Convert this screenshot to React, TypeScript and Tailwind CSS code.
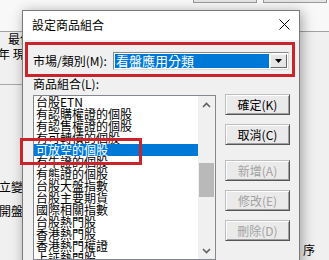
import React from "react";

const items = [
  "台股ETN",
  "有認購權證的個股",
  "有認售權證的個股",
  "有可轉債的個股",
  "可放空的個股",
  "有牛證的個股",
  "有熊證的個股",
  "台股大盤指數",
  "台股主要期貨",
  "國際相關指數",
  "台股熱門股",
  "香港熱門股",
  "香港熱門權證",
  "上証熱門股",
];

function Btn({ label, disabled }: { label: string; disabled?: boolean }) {
  return (
    <div
      className={`h-[21px] w-[65px] flex items-center justify-center text-[12px] leading-[12px] bg-[#eaeaea] border border-[#bdbdbd] border-b-[#555555] border-r-[#555555] shadow-[inset_1px_1px_0_#ffffff,inset_-1px_-1px_0_#a0a0a0] ${
        disabled ? "text-[#a3a3a3]" : "text-black"
      }`}
    >
      {label}
    </div>
  );
}

function Chevron({ up }: { up?: boolean }) {
  return (
    <svg width="9" height="6" viewBox="0 0 9 6">
      <path
        d={up ? "M1 5 L4.5 1.5 L8 5" : "M1 1 L4.5 4.5 L8 1"}
        fill="none"
        stroke="#606060"
        strokeWidth="1.6"
      />
    </svg>
  );
}

export default function App() {
  return (
    <div className="relative w-[329px] h-[260px] overflow-hidden bg-[#f0f0f0] font-['Noto_Sans_CJK_TC',sans-serif] text-black">
      {/* background application */}
      <div className="flex flex-col h-full">
        <div className="h-[32px] shrink-0 bg-[#f8f8f8] border-b border-[#a0a0a0] flex justify-end gap-[6px] pr-[2px]">
          <div className="w-[64px] h-[3px] border-x border-b border-[#9a9a9a] bg-[#e4e4e4]" />
          <div className="w-[64px] h-[3px] border-x border-b border-[#9a9a9a] bg-[#e4e4e4]" />
        </div>
        <div className="flex-1 flex justify-between">
          <div className="w-[22px] flex flex-col text-[12px] leading-[12px] whitespace-nowrap">
            <div className="pl-[8px] mt-[1px]">最佳</div>
            <div className="-ml-[2px] mt-[3px]">年 現</div>
            <div className="mt-[24px] border-b border-[#a8a8a8]" />
            <div className="-ml-[1px] mt-[96px]">立變化</div>
            <div className="-ml-[1px] mt-[12px]">開盤價</div>
          </div>
          <div className="w-[29px] flex flex-col justify-end pb-[4px] pl-[3px] text-[12px] leading-[12px]">
            序
          </div>
        </div>
      </div>

      {/* dialog */}
      <div className="absolute left-[22px] top-[10px] w-[278px] h-[262px] border border-[#7a7a7a] bg-[#f0f0f0] shadow-[2px_2px_12px_rgba(0,0,0,0.35)] flex flex-col">
        <div className="h-[29px] shrink-0 bg-white flex items-center justify-between pl-[9px] pr-[9px]">
          <span className="text-[12px] leading-[12px] -mt-[2px]">設定商品組合</span>
          <svg width="11" height="11" viewBox="0 0 11 11" className="-mt-[2px]">
            <path d="M0.5 0.5 L10.5 10.5 M10.5 0.5 L0.5 10.5" stroke="#000" strokeWidth="1" />
          </svg>
        </div>
        <div className="flex-1 flex flex-col pl-[2px] pr-[4px] pt-[2px]">
          {/* market/category row (highlighted) */}
          <div className="h-[35px] border-[3px] border-[#c9242b] flex items-center pl-[5px] pr-[3px] pt-[2px]">
            <span className="w-[80px] text-[12px] leading-[12px] whitespace-nowrap">市場/類別(M):</span>
            <div className="w-[176px] h-[18px] border border-[#8a8a8a] border-b-[#dcdcdc] border-r-[#dcdcdc] bg-white flex p-[1px]">
              <div className="flex-1 bg-[#0078d7] text-white text-[13px] leading-[14px] pl-[1px] whitespace-nowrap">
                看盤應用分類
              </div>
              <div className="w-[17px] ml-[1px] bg-[#e6e6e6] border border-[#f8f8f8] border-b-[#6a6a6a] border-r-[#6a6a6a] flex items-center justify-center">
                <svg width="7" height="4" viewBox="0 0 7 4">
                  <path d="M0 0 L7 0 L3.5 4 Z" fill="#000" />
                </svg>
              </div>
            </div>
          </div>
          <div className="pl-[8px] mt-[1px] text-[12px] leading-[12px]">商品組合(L):</div>
          <div className="flex items-start mt-[4px] pl-[8px]">
            {/* listbox */}
            <div className="mt-[1px] w-[183px] h-[165px] border border-[#828790] bg-white flex overflow-hidden">
              <div className="w-[164px] flex flex-col">
                {items.map((it, i) => (
                  <div
                    key={it}
                    className={`h-[12px] shrink-0 pl-[2px] text-[12px] leading-[12px] whitespace-nowrap ${
                      i === 4 ? "bg-[#0078d7] text-white" : "text-black"
                    }`}
                  >
                    {it}
                  </div>
                ))}
              </div>
              <div className="w-[17px] bg-[#f0f0f0] flex flex-col">
                <div className="h-[17px] flex items-center justify-center">
                  <Chevron up />
                </div>
                <div className="mt-[50px] mx-[1px] h-[34px] bg-[#b9b9b9]" />
                <div className="flex-1" />
                <div className="h-[17px] flex items-center justify-center">
                  <Chevron />
                </div>
              </div>
            </div>
            {/* buttons */}
            <div className="ml-[9px] flex flex-col">
              <Btn label="確定(K)" />
              <div className="mt-[9px]">
                <Btn label="取消(C)" />
              </div>
              <div className="mt-[15px]">
                <Btn label="新增(A)" disabled />
              </div>
              <div className="mt-[9px]">
                <Btn label="修改(E)" disabled />
              </div>
              <div className="mt-[9px]">
                <Btn label="刪除(D)" disabled />
              </div>
            </div>
          </div>
        </div>
      </div>

      {/* annotation around selected item */}
      <div className="absolute left-[20px] top-[138px] w-[122px] h-[27px] border-[3px] border-[#c9242b]" />
    </div>
  );
}
